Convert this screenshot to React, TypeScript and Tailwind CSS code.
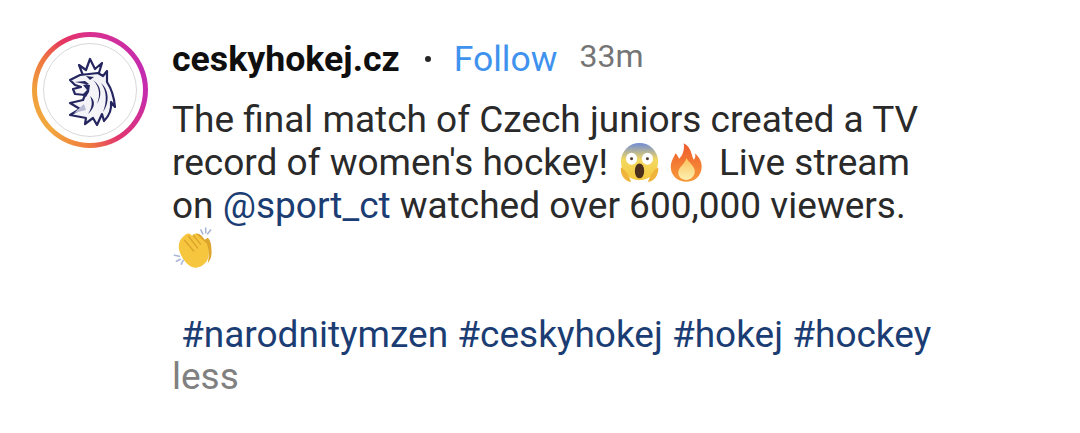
import React from "react"

function Lion() {
  return (
    <svg viewBox="0 0 60 76" className="w-[60px] h-[76px]" fill="none">
      {/* crown */}
      <path d="M19 13 L26 18 L30 7 L35 17 L42 11 L38 24 L24 26 Z" fill="#fff" stroke="#25265f" strokeWidth="2.2" strokeLinejoin="round" />
      {/* mane and head */}
      <path
        d="M20 23 L38 21 L43 24 L47 19 L47 30 C51 36 54 44 55 55 L51 50 C52 58 49 64 44 69 L42 62 L37 73 L33 66 L25 72 L26 66 L10 63 L20 57 L10 51 L23 48 L25 43 L15 42 L13 37 L21 35 L15 33 L10 28 Z"
        fill="#f3f3f8"
        stroke="#25265f"
        strokeWidth="2.2"
        strokeLinejoin="round"
      />
      {/* muzzle, eye and mane strands */}
      <path d="M15 30 L25 29 L29 32 L23 33 L27 38 L22 43 L26 45 L29 40 L30 33 Z" fill="#25265f" />
      <path d="M26 24 L34 25 L30 28 Z" fill="#25265f" />
      <path d="M33 28 C39 34 41 42 37 52 C42 44 42 34 33 28 Z" fill="#25265f" />
      <path d="M41 31 C47 39 47 50 43 60 C50 50 49 38 41 31 Z" fill="#25265f" />
      <path d="M30 44 C33 50 32 56 28 62 C35 56 36 49 30 44 Z" fill="#25265f" />
      <path d="M24 52 L14 61 L26 58 Z" fill="#b9bbd4" />
    </svg>
  )
}

function ScreamEmoji() {
  return (
    <svg viewBox="0 0 44 44" className="w-[41px] h-[41px] ml-[2px] inline-block align-[-8px]">
      <defs>
        <linearGradient id="scream" x1="0" y1="0" x2="0" y2="1">
          <stop offset="0" stopColor="#6f8bd8" />
          <stop offset="0.45" stopColor="#f3d960" />
          <stop offset="1" stopColor="#f5c83e" />
        </linearGradient>
      </defs>
      <circle cx="22" cy="21" r="20" fill="url(#scream)" />
      <ellipse cx="13.5" cy="18" rx="6" ry="6.5" fill="#fff" />
      <ellipse cx="30.5" cy="18" rx="6" ry="6.5" fill="#fff" />
      <circle cx="13.5" cy="18" r="1.6" fill="#4a3a2a" />
      <circle cx="30.5" cy="18" r="1.6" fill="#4a3a2a" />
      <ellipse cx="22" cy="31" rx="5" ry="8" fill="#4b2f1c" />
      <path d="M2 27 C5 29 10 33 13 43 C6 42 1 35 2 27 Z" fill="#f0b43c" />
      <path d="M42 27 C39 29 34 33 31 43 C38 42 43 35 42 27 Z" fill="#f0b43c" />
    </svg>
  )
}

function FireEmoji() {
  return (
    <svg viewBox="0 0 36 44" className="w-[33px] h-[41px] mr-[-2px] inline-block align-[-8px]">
      <defs>
        <linearGradient id="fire" x1="0" y1="0" x2="0" y2="1">
          <stop offset="0" stopColor="#ef5a2c" />
          <stop offset="1" stopColor="#f79a3a" />
        </linearGradient>
        <linearGradient id="flame" x1="0" y1="0" x2="0" y2="1">
          <stop offset="0" stopColor="#fbc15a" />
          <stop offset="1" stopColor="#fdf0b0" />
        </linearGradient>
      </defs>
      <path d="M15 1 C24 6 23 14 26 19 C28 17 28 14 27 12 C33 17 36 24 34 31 C32 39 25 43 18 43 C9 43 2 37 1 29 C0 22 4 17 6 12 C8 14 9 16 10 18 C14 14 16 8 15 1 Z" fill="url(#fire)" />
      <path d="M18 17 C21 23 28 26 27 33 C26 38 22 41 18 41 C13 41 9 38 9 33 C9 27 16 24 18 17 Z" fill="url(#flame)" />
    </svg>
  )
}

function ClapEmoji() {
  return (
    <svg viewBox="0 0 44 44" className="w-[44px] h-[43px] inline-block align-[-8px]">
      <path d="M12 9 C15 6 18 6 20 9 L23 7 C26 6 28 8 30 11 L36 17 C37 22 38 27 36 33 C33 40 25 43 20 41 C14 38 10 32 8 27 C5 21 6 13 12 9 Z" fill="#f7c63f" />
      <path d="M24 7 C28 6 31 10 33 13 L36 11 C39 13 40 19 40 26 C40 31 38 35 36 37 C38 30 37 22 35 17 Z" fill="#dea52c" />
      <path d="M12 13 L22 25 M16 9 L26 22 M21 8 L29 18" stroke="#dea52c" strokeWidth="1.5" fill="none" />
      <path d="M29 3 L31 7 M34 1 L34 6 M39 3 L36 7 M2 29 L7 30 M4 35 L8 33 M9 38 L11 34" stroke="#a9b6d6" strokeWidth="1.6" strokeLinecap="round" />
    </svg>
  )
}

function Tag({ children }: { children: React.ReactNode }) {
  return <span className="text-[#1b3d73]">{children}</span>
}

export default function App() {
  return (
    <div className="w-[1080px] h-[433px] bg-white overflow-hidden font-['Roboto',sans-serif] flex items-start gap-6 pl-8 pt-8">
      <div className="w-[116px] h-[116px] shrink-0 rounded-full bg-[conic-gradient(#d9308f,#c42bb0_70deg,#c82ca8_100deg,#e2366f_150deg,#ef7a3f_180deg,#f2a73e_225deg,#f0a03c_270deg,#ee7440_305deg,#e6355f_330deg,#d9308f)] flex items-center justify-center">
        <div className="w-[106px] h-[106px] rounded-full bg-white flex items-center justify-center">
          <div className="w-[94px] h-[94px] rounded-full border-[1.5px] border-[#d8d8dc] flex items-center justify-center">
            <Lion />
          </div>
        </div>
      </div>

      <div className="text-[37px] leading-[43px] text-[#2a2a2a]">
        <div className="flex items-center h-[44px] mt-[5px]">
          <span className="font-bold text-[35.7px] text-[#0f0f0f]">ceskyhokej.cz</span>
          <span className="ml-[25px] w-[6px] h-[6px] rounded-full bg-[#262626]" />
          <span className="ml-[23px] text-[35.5px] text-[#3f93ee]">Follow</span>
          <span className="ml-[22px] text-[#757575] text-[32px] -mt-[6px]">33m</span>
        </div>
        <div className="mt-[17px] w-[800px]">
          <div className="h-[43px]">The final match of Czech juniors created a TV</div>
          <div className="h-[43px]">
            record of women's hockey! <ScreamEmoji /> <FireEmoji /> &nbsp;Live stream
          </div>
          <div className="h-[43px]">
            on <Tag>@sport_ct</Tag> watched over 600,000 viewers.
          </div>
          <div className="h-[43px]">
            <ClapEmoji />
          </div>
          <div className="h-[43px]" />
          <div className="h-[43px] pl-[9px]">
            <Tag>#narodnitymzen #ceskyhokej #hokej #hockey</Tag>
          </div>
          <div className="h-[43px] -mt-[1px] text-[#808080]">less</div>
        </div>
      </div>
    </div>
  )
}
